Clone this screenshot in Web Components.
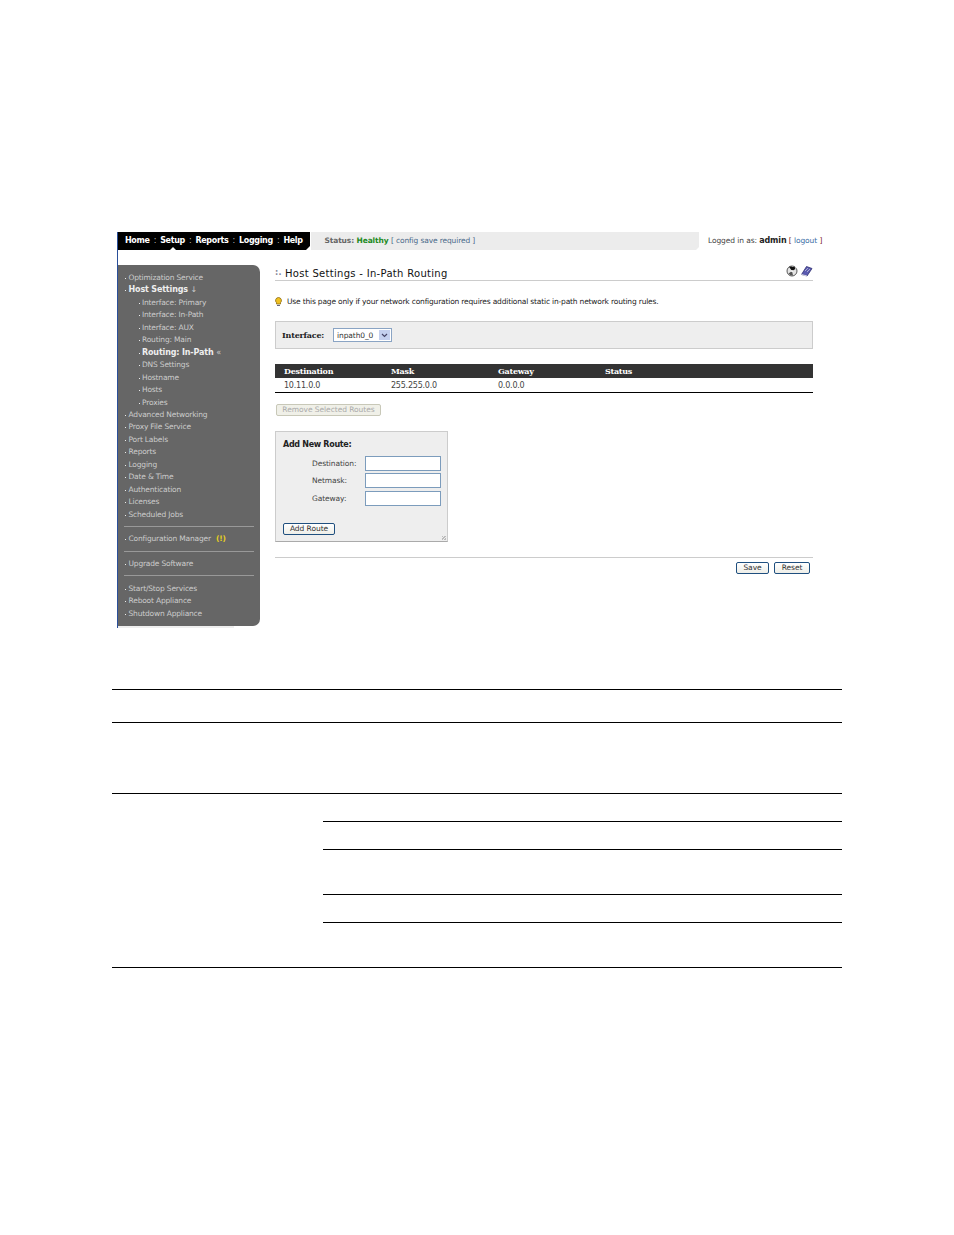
<!DOCTYPE html>
<html lang="en">
<head>
<meta charset="utf-8">
<title>Host Settings - In-Path Routing</title>
<style>
  html, body { margin: 0; background: #fff; }
  body { font: 8px "DejaVu Sans", sans-serif; color: #333; width: 954px; height: 1235px; overflow: hidden; }
</style>
</head>
<body>
<app-shell></app-shell>
<doc-rules></doc-rules>

<script>
class TopBar extends HTMLElement {
  constructor(){
    super();
    this.attachShadow({ mode: "open" });
  }
  connectedCallback(){
    const tabs = ["Home","Setup","Reports","Logging","Help"];
    this.shadowRoot.innerHTML = `
      <style>
        :host { display: flex; height: 18px; font-family: "DejaVu Sans", sans-serif; }
        :host > * { flex: none; }
        nav {
          width: 192px; background: #000; color: #fff; display: flex; align-items: center;
          box-sizing: border-box; padding: 0 0 2px 7px;
          font-weight: bold; font-size: 8px; letter-spacing: -.33px;
          clip-path: polygon(0 0, 100% 0, 100% 14px, 188px 100%, 0 100%);
          position: relative;
        }
        nav i { font-style: normal; font-weight: normal; color: #bbb; width: 10.500px; text-align: center; }
        .notch { position: absolute; left: 52px; bottom: 0; width: 0; height: 0;
          border: 3px solid transparent; border-bottom-color: #fff; border-top: 0; }
        .status {
          margin-left: 1px; width: 388px; background: #ececec; box-sizing: border-box;
          padding: 0 0 2px 13.500px; display: flex; align-items: center; gap: 2.500px; font-size: 7.500px; letter-spacing: -.13px; color: #666; white-space: pre;
          clip-path: polygon(0 0, 100% 0, 100% 15px, 385px 100%, 0 100%);
        }
        .status b { color: #666; }
        .status b.ok { color: #1c8a1c; }
        .status a { color: #4a6a8a; }
        .login { margin-left: 9px; font-size: 7.500px; letter-spacing: -.1px; color: #444; padding-top: 4px; white-space: pre; }
        .login b { color: #222; font-size: 8px; }
        .login s { text-decoration: none; color: #7a2222; }
        .login a { color: #3b6ea5; }
      </style>
      <nav>${tabs.map(t => `<span>${t}</span>`).join("<i>:</i>")}<span class="notch"></span></nav>
      <div class="status"><b>Status:</b><b class="ok">Healthy</b><a>[ config save required ]</a></div>
      <div class="login">Logged in as: <b>admin</b> <s>[</s> <a>logout</a> <s>]</s></div>
    `;
  }
}
customElements.define("top-bar", TopBar);

class SideNav extends HTMLElement {
  constructor(){
    super();
    this.attachShadow({ mode: "open" });
  }
  connectedCallback(){
    const groups = [
      [["Optimization Service"],["Host Settings","","b","↓"],["Interface: Primary",1],["Interface: In-Path",1],["Interface: AUX",1],["Routing: Main",1],["Routing: In-Path",1,"b","«"],["DNS Settings",1],["Hostname",1],["Hosts",1],["Proxies",1],["Advanced Networking"],["Proxy File Service"],["Port Labels"],["Reports"],["Logging"],["Date & Time"],["Authentication"],["Licenses"],["Scheduled Jobs"]],
      [["Configuration Manager",0,"","<em>(!)</em>"]],
      [["Upgrade Software"]],
      [["Start/Stop Services"],["Reboot Appliance"],["Shutdown Appliance"]]
    ];
    const row = ([t, sub, b, tail]) => `<li class="${sub ? "sub" : ""} ${b || ""}">${t.replace("&","&amp;")}${tail ? ` <u>${tail}</u>` : ""}</li>`;
    this.shadowRoot.innerHTML = `
      <style>
        :host { display: block; width: 142px; height: 361px; background: #666; box-sizing: border-box;
          border-radius: 0 7px 7px 0; padding: 7px 6px 0 6px; font: 7.500px/12.450px "DejaVu Sans", sans-serif; color: #ccc; letter-spacing: -.18px; }
        ul { list-style: none; margin: 0; padding: 0; }
        ul + ul { border-top: 1px solid #999; margin-top: 4.800px; padding-top: 6.500px; }
        li { white-space: nowrap; padding-left: 4.500px; position: relative; }
        li::before { content: ""; position: absolute; left: 1px; top: 6px; width: 1px; height: 1px; background: #eee; }
        .sub { padding-left: 18px; }
        .sub::before { left: 15px; }
        .b { color: #eee; font-weight: bold; font-size: 8px; letter-spacing: -.15px; }
        u { text-decoration: none; font-weight: normal; color: #ccc; }
        em { font-style: normal; color: #e8d020; font-weight: bold; margin-left: 3px; }
      </style>
      ${groups.map(g => `<ul>${g.map(row).join("")}</ul>`).join("")}
    `;
  }
}
customElements.define("side-nav", SideNav);

class PageHeading extends HTMLElement {
  constructor(){
    super();
    this.attachShadow({ mode: "open" });
  }
  connectedCallback(){
    this.shadowRoot.innerHTML = `
      <style>
        :host { display: flex; align-items: center; height: 15px; border-bottom: 1px solid #ccc; font: 10px "DejaVu Sans", sans-serif; color: #111; letter-spacing: .3px; }
        .dots { color: #889; font-size: 8px; font-weight: bold; width: 10px; }
        h1 { flex: 1; margin: 0; padding-top: 1px; font: inherit; }
        svg { display: block; margin-bottom: 4px; }
      </style>
      <span class="dots">:.</span>
      <h1><slot></slot></h1>
      <svg width="27" height="12" viewBox="0 0 27 12">
        <circle cx="6" cy="6" r="5" fill="#e4e4e4" stroke="#333" stroke-width=".8"/>
        <path d="M6 6L10.500 3.500A5 5 0 0 0 6 1z" fill="#fff"/>
        <path d="M6 6L3 1.800 8.500 1.500 9.500 4z" fill="#111"/>
        <path d="M2.500 8.500L6 6l1 4.500a5 5 0 0 1-4.500-2z" fill="#555"/>
        <circle cx="6" cy="6" r="1" fill="#fff"/>
        <path d="M15.500 9.500L20.500 1.500l5.500 2-5 7.500z" fill="#5a5ab0" stroke="#2e2e70" stroke-width=".8"/>
        <path d="M19 6l3-3M21 7l3-3" stroke="#ccd" stroke-width=".7"/>
        <path d="M15.500 9.500l5.500 1.500" stroke="#fff" stroke-width=".8"/>
      </svg>
    `;
  }
}
customElements.define("page-heading", PageHeading);

class RouteTable extends HTMLElement {
  constructor(){
    super();
    this.attachShadow({ mode: "open" });
  }
  connectedCallback(){
    this.shadowRoot.innerHTML = `
      <style>
        :host { display: block; font: 8px "DejaVu Sans", sans-serif; }
        .row { display: grid; grid-template-columns: repeat(4, 107px) 1fr; padding-left: 9px; align-items: center; }
        .head { height: 14px; background: #333; color: #fff; font: bold 8px "DejaVu Serif", "DejaVu Sans", serif; letter-spacing: -.27px; }
        .body { height: 14px; color: #444; border-bottom: 1px solid #000; letter-spacing: -.22px; padding-top: 1px; box-sizing: content-box; height: 13px; }
      </style>
      <div class="row head"><span>Destination</span><span>Mask</span><span>Gateway</span><span>Status</span></div>
      <div class="row body"><span>10.11.0.0</span><span>255.255.0.0</span><span>0.0.0.0</span><span></span></div>
    `;
  }
}
customElements.define("route-table", RouteTable);

class UiButton extends HTMLElement {
  constructor(){
    super();
    this.attachShadow({ mode: "open" });
  }
  connectedCallback(){
    const off = this.hasAttribute("disabled");
    this.shadowRoot.innerHTML = `
      <style>
        :host { display: inline-block; vertical-align: top; }
        button {
          display: block; box-sizing: border-box; height: 12px; padding: 0; width: ${this.getAttribute("w")}px;
          border: 1px solid ${off ? "#c8c8b8" : "#1f4f7f"}; border-radius: 2px;
          background: ${off ? "#f0f0e8" : "linear-gradient(#fff,#eeeee8)"};
          color: ${off ? "#aaa" : "#333"}; font: 7.500px/10px "DejaVu Sans", sans-serif; letter-spacing: -.05px;
        }
      </style>
      <button ${off ? "disabled" : ""}><slot></slot></button>
    `;
  }
}
customElements.define("ui-button", UiButton);

class AddRoute extends HTMLElement {
  constructor(){
    super();
    this.attachShadow({ mode: "open" });
  }
  connectedCallback(){
    const fields = ["Destination:","Netmask:","Gateway:"];
    this.shadowRoot.innerHTML = `
      <style>
        :host { display: block; width: 173px; height: 111px; box-sizing: border-box; background: #eee; border: 1px solid #ccc; border-bottom-color: #aaa; padding: 8px 7px 0; font: 7.500px "DejaVu Sans", sans-serif; color: #444; position: relative; letter-spacing: -.1px; }
        h2 { margin: 0 0 5px; font: bold 8px/10px "DejaVu Sans", sans-serif; color: #222; letter-spacing: -.3px; height: 10px; }
        .f { display: grid; grid-template-columns: 53px 76px; padding-left: 29px; height: 17.300px; align-items: center; }
        .f span { display: block; box-sizing: border-box; height: 15px; background: #fff; border: 1px solid #7c9cbc; }
        ui-button { margin-top: 16px; }
        .grip { position: absolute; right: 1px; bottom: 1px; width: 4px; height: 4px; background: repeating-linear-gradient(135deg, #bbb 0 1px, transparent 1px 2px); }
      </style>
      <h2>Add New Route:</h2>
      ${fields.map(f => `<div class="f"><label>${f}</label><span></span></div>`).join("")}
      <ui-button w="52">Add Route</ui-button>
      <i class="grip"></i>
    `;
  }
}
customElements.define("add-route", AddRoute);

class AppShell extends HTMLElement {
  constructor(){
    super();
    this.attachShadow({ mode: "open" });
  }
  connectedCallback(){
    this.shadowRoot.innerHTML = `
      <style>
        :host { display: block; box-sizing: border-box; margin: 232px 0 0 117px; width: 703px; height: 396px; border-left: 1px solid #2a4f9a; font: 8px "DejaVu Sans", sans-serif; color: #333; position: relative; }
        .cols { display: flex; gap: 15px; margin-top: 15px; }
        main { width: 538px; }
        .note { display: flex; align-items: center; gap: 5px; margin-top: 14px; height: 13px; color: #222; font-size: 7.500px; letter-spacing: -.18px; }
        .iface { display: flex; align-items: center; box-sizing: border-box; height: 28px; margin-top: 13px; padding-left: 6px; background: #eee; border: 1px solid #ccc; font-weight: bold; color: #222; }
        .iface b { font: bold 8px "DejaVu Serif", serif; width: 51px; letter-spacing: -.2px; }
        .select { display: flex; align-items: center; justify-content: space-between; box-sizing: border-box; width: 59px; height: 14px; background: #fff; border: 1px solid #8aa4c4; font-weight: normal; font-size: 7.500px; letter-spacing: -.1px; color: #333; padding: 0 1px 0 3px; }
        .select i { width: 11px; height: 10px; background: #c4d0ee; display: flex; align-items: center; justify-content: center; }
        route-table { margin-top: 15px; }
        .remove { margin: 11px 0 0 1px; }
        add-route { margin-top: 15px; }
        .actions { display: flex; justify-content: flex-end; gap: 5px; margin-top: 15px; padding: 4px 3px 0 0; border-top: 1px solid #ccc; }
        .strip { position: absolute; left: 0; bottom: 0; width: 116px; height: 2px; background: #eee; }
      </style>
      <top-bar></top-bar>
      <div class="cols">
        <side-nav></side-nav>
        <main>
          <page-heading>Host Settings - In-Path Routing</page-heading>
          <div class="note">
            <svg width="7" height="10" viewBox="0 0 7 10"><path d="M3.500.500a3 3 0 0 1 2 5.200V7h-4V5.700a3 3 0 0 1 2-5.200z" fill="#f0c020" stroke="#8a6a10" stroke-width=".8"/><path d="M2 8.500h3" stroke="#667"/></svg>
            <span>Use this page only if your network configuration requires additional static in-path network routing rules.</span>
          </div>
          <div class="iface"><b>Interface:</b><div class="select">inpath0_0<i><svg width="7" height="5" viewBox="0 0 7 5"><path d="M1 1l2.500 2.500L6 1" fill="none" stroke="#446" stroke-width="1.200"/></svg></i></div></div>
          <route-table></route-table>
          <div class="remove"><ui-button w="105" disabled>Remove Selected Routes</ui-button></div>
          <add-route></add-route>
          <div class="actions"><ui-button w="33">Save</ui-button><ui-button w="36">Reset</ui-button></div>
        </main>
      </div>
      <div class="strip"></div>
    `;
  }
}
customElements.define("app-shell", AppShell);

class DocRules extends HTMLElement {
  constructor(){
    super();
    this.attachShadow({ mode: "open" });
  }
  connectedCallback(){
    // row heights of the empty document table under the screenshot
    const rows = [[33,0],[71,0],[28,1],[28,1],[45,1],[28,1],[45,0]];
    this.shadowRoot.innerHTML = `
      <style>
        :host { display: block; width: 730px; margin: 61px 0 0 112px; border-top: 1px solid #000; }
        div { box-sizing: border-box; border-bottom: 1px solid #000; }
        .in { margin-left: 211px; }
      </style>
      ${rows.map(([h, indent]) => `<div class="${indent ? "in" : ""}" style="height:${h}px"></div>`).join("")}
    `;
  }
}
customElements.define("doc-rules", DocRules);
</script>
</body>
</html>
